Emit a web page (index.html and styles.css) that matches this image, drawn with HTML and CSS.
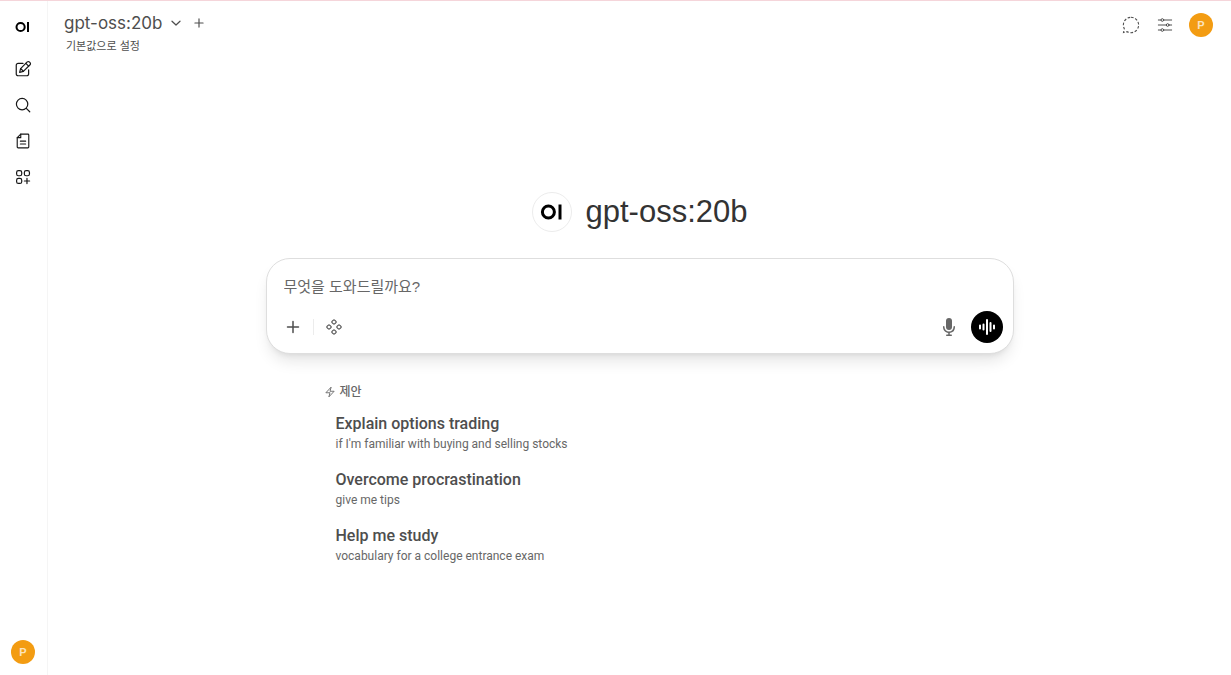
FILE: index.html
```html
<!DOCTYPE html>
<html lang="ko">
<head>
  <meta charset="UTF-8" />
  <meta name="viewport" content="width=device-width, initial-scale=1" />
  <title>Open WebUI</title>
  <link rel="stylesheet" href="styles.css">
</head>
<body>
  <div class="app">
    <nav class="sidebar" aria-label="Sidebar">
      <div class="sidebar-top">
        <button type="button" class="side-btn logo-btn" aria-label="Open sidebar">
          <svg width="16" height="16" viewBox="0 0 16 16" fill="none" stroke="#000" stroke-width="2">
            <circle cx="5.6" cy="8" r="4.1" />
            <path d="M13 3v10" />
          </svg>
        </button>
        <button type="button" class="side-btn" aria-label="New chat">
          <svg width="18" height="18" viewBox="0 0 24 24" fill="none" stroke="currentColor" stroke-width="1.600" stroke-linecap="round" stroke-linejoin="round">
            <path d="M12 4.500H5.500a2.500 2.500 0 0 0-2.500 2.500v11.500a2.500 2.500 0 0 0 2.500 2.500H17a2.500 2.500 0 0 0 2.500-2.500V13" />
            <path d="M7.500 16.500l1.300-5L17.700 2.600a1.900 1.900 0 0 1 2.700 0l1 1a1.900 1.900 0 0 1 0 2.700L12.500 15.200z" />
            <path d="M15.800 4.500l3.700 3.700M9 11.500l3.500 3.500" />
          </svg>
        </button>
        <button type="button" class="side-btn" aria-label="Search">
          <svg width="18" height="18" viewBox="0 0 24 24" fill="none" stroke="currentColor" stroke-width="1.600" stroke-linecap="round">
            <circle cx="10.800" cy="10.800" r="7.600" />
            <path d="M16.400 16.400L21 21" />
          </svg>
        </button>
        <button type="button" class="side-btn" aria-label="Notes">
          <svg width="18" height="18" viewBox="0 0 24 24" fill="none" stroke="currentColor" stroke-width="1.500" stroke-linecap="round" stroke-linejoin="round">
            <path d="M9 2.800h9.500a1.200 1.200 0 0 1 1.200 1.200v16a1.200 1.200 0 0 1-1.200 1.200h-13A1.200 1.200 0 0 1 4.300 20V7.500z" />
            <path d="M9 2.800v4.700H4.300M8.500 12.200h7M8.500 16h7" />
          </svg>
        </button>
        <button type="button" class="side-btn" aria-label="Workspace">
          <svg width="18" height="18" viewBox="0 0 24 24" fill="none" stroke="currentColor" stroke-width="1.600" stroke-linecap="round">
            <rect x="3.500" y="3.500" width="6.800" height="6.800" rx="2.400" />
            <rect x="13.800" y="3.500" width="6.800" height="6.800" rx="2.400" />
            <rect x="3.500" y="13.800" width="6.800" height="6.800" rx="2.400" />
            <path d="M17.300 13.800v7M13.800 17.300h7" />
          </svg>
        </button>
      </div>
      <button type="button" class="avatar" aria-label="User menu">P</button>
    </nav>

    <main class="main">
      <header class="topbar">
        <div class="model">
          <div class="model-row">
            <button type="button" class="model-name">
              gpt-oss:20b
              <svg width="12" height="12" viewBox="0 0 24 24" fill="none" stroke="currentColor" stroke-width="2.500" stroke-linecap="round" stroke-linejoin="round">
                <path d="M4 8.500l8 7.500 8-7.500" />
              </svg>
            </button>
            <button type="button" class="icon-btn" aria-label="Add model">
              <svg width="14" height="14" viewBox="0 0 24 24" fill="none" stroke="currentColor" stroke-width="2" stroke-linecap="round">
                <path d="M12 5v14M5 12h14" />
              </svg>
            </button>
          </div>
          <button type="button" class="set-default">기본값으로 설정</button>
        </div>
        <div class="topbar-actions">
          <button type="button" class="icon-btn" aria-label="Temporary chat">
            <svg width="20" height="20" viewBox="0 0 24 24" fill="none" stroke="currentColor" stroke-width="1.300" stroke-dasharray="3.200 2">
              <path d="M12 2.800a9.200 9.200 0 1 1-4.600 17.200L3 21l1-4.500A9.200 9.200 0 0 1 12 2.800z" />
            </svg>
          </button>
          <button type="button" class="icon-btn" aria-label="Controls">
            <svg width="20" height="20" viewBox="0 0 24 24" fill="none" stroke="currentColor" stroke-width="1.200" stroke-linecap="round">
              <path d="M10.500 6H20M4 6h3M4 12h9.500M17 12h3M10.500 18H20M4 18h3" />
              <circle cx="8.800" cy="6" r="1.600" />
              <circle cx="15.200" cy="12" r="1.600" />
              <circle cx="8.800" cy="18" r="1.600" />
            </svg>
          </button>
          <button type="button" class="avatar" aria-label="User menu">P</button>
        </div>
      </header>

      <section class="welcome">
        <h1 class="welcome-title">
          <span class="welcome-logo">
            <svg width="24" height="24" viewBox="0 0 24 24" fill="none" stroke="#000" stroke-width="3">
              <circle cx="8.400" cy="12" r="6" />
              <path d="M20 4.500v15" />
            </svg>
          </span>
          gpt-oss:20b
        </h1>

        <form class="composer">
          <input class="composer-input" type="text" placeholder="무엇을 도와드릴까요?" aria-label="무엇을 도와드릴까요?">
          <div class="composer-bar">
            <div class="composer-tools">
              <button type="button" class="tool-btn" aria-label="More">
                <svg width="20" height="20" viewBox="0 0 20 20" fill="none" stroke="currentColor" stroke-width="1.500" stroke-linecap="round">
                  <path d="M10 4.500v11M4.500 10h11" />
                </svg>
              </button>
              <span class="divider"></span>
              <button type="button" class="tool-btn" aria-label="Integrations">
                <svg width="18" height="18" viewBox="0 0 18 18" fill="none" stroke="currentColor" stroke-width="1.100">
                  <rect x="7.200" y="2.200" width="3.600" height="3.600" rx="0.800" transform="rotate(45 9 4)" />
                  <rect x="7.200" y="12.200" width="3.600" height="3.600" rx="0.800" transform="rotate(45 9 14)" />
                  <rect x="2.200" y="7.200" width="3.600" height="3.600" rx="0.800" transform="rotate(45 4 9)" />
                  <rect x="12.200" y="7.200" width="3.600" height="3.600" rx="0.800" transform="rotate(45 14 9)" />
                </svg>
              </button>
            </div>
            <div class="composer-tools">
              <button type="button" class="tool-btn mic" aria-label="Dictate">
                <svg width="20" height="20" viewBox="0 0 20 20" fill="currentColor">
                  <path d="M7 4a3 3 0 0 1 6 0v6a3 3 0 1 1-6 0V4Z" />
                  <path d="M5.500 9.643a.75.75 0 0 0-1.500 0V10c0 3.060 2.290 5.585 5.250 5.954V17.500h-1.500a.75.75 0 0 0 0 1.500h4.500a.75.75 0 0 0 0-1.500h-1.500v-1.546A6.001 6.001 0 0 0 16 10v-.357a.75.75 0 0 0-1.500 0V10a4.500 4.500 0 0 1-9 0v-.357Z" />
                </svg>
              </button>
              <button type="button" class="voice-btn" aria-label="Voice mode">
                <svg width="20" height="20" viewBox="0 0 20 20" fill="none" stroke="#fff" stroke-width="2" stroke-linecap="round">
                  <path d="M3 8.500v3M6.500 7.500v5M10 3v14M13.500 6v8M17 8.500v3" />
                </svg>
              </button>
            </div>
          </div>
        </form>

        <div class="suggestions">
          <h2 class="suggestions-label">
            <svg width="12" height="12" viewBox="0 0 24 24" fill="none" stroke="currentColor" stroke-width="1.800" stroke-linejoin="round">
              <path d="M3.750 13.500l10.500-11.250L12 10.500h8.250L9.750 21.750 12 13.500H3.750z" />
            </svg>
            제안
          </h2>
          <button type="button" class="suggestion">
            <span class="suggestion-title">Explain options trading</span>
            <span class="suggestion-text">if I'm familiar with buying and selling stocks</span>
          </button>
          <button type="button" class="suggestion">
            <span class="suggestion-title">Overcome procrastination</span>
            <span class="suggestion-text">give me tips</span>
          </button>
          <button type="button" class="suggestion">
            <span class="suggestion-title">Help me study</span>
            <span class="suggestion-text">vocabulary for a college entrance exam</span>
          </button>
        </div>
      </section>
    </main>
  </div>
</body>
</html>
```
FILE: styles.css
```css
* {
  box-sizing: border-box;
  margin: 0;
  padding: 0;
}
body {
  font-family: "Liberation Sans", "Noto Sans CJK KR", sans-serif;
  color: #4e4e4e;
  background: #fff;
}
button {
  font: inherit;
  color: inherit;
  background: none;
  border: none;
  cursor: pointer;
}
svg {
  display: block;
  flex-shrink: 0;
}

.app {
  display: flex;
  min-height: 100vh;
  border-top: 1px solid #f5d5da;
}

/* Sidebar */
.sidebar {
  width: 48px;
  flex-shrink: 0;
  display: flex;
  flex-direction: column;
  justify-content: space-between;
  padding: 8px 6px 11px 5px;
  border-right: 1px solid #f5f5f5;
  color: #171717;
}
.sidebar-top {
  display: flex;
  flex-direction: column;
}
.side-btn {
  width: 36px;
  height: 36px;
  display: flex;
  align-items: center;
  justify-content: center;
}
.logo-btn {
  margin-bottom: 6px;
}
.avatar {
  width: 24px;
  height: 24px;
  border-radius: 50%;
  background: #f39c12;
  color: #fbe3bd;
  font-size: 11px;
  font-weight: 700;
  line-height: 24px;
}
.sidebar .avatar {
  align-self: center;
}

/* Top bar */
.main {
  flex: 1;
  min-width: 0;
}
.topbar {
  display: flex;
  justify-content: space-between;
  align-items: flex-start;
  height: 56px;
  padding: 10px 18px 0 16px;
}
.model-row {
  display: flex;
  align-items: center;
  gap: 10px;
  height: 24px;
}
.model-name {
  display: flex;
  align-items: center;
  gap: 8px;
  font-family: Inter, sans-serif;
  font-size: 17px;
  line-height: 24px;
}
.set-default {
  display: block;
  padding-left: 2px;
  font-size: 11px;
  line-height: 22px;
}
.topbar-actions {
  display: flex;
  align-items: center;
  gap: 14px;
  padding-top: 2px;
}

/* Welcome */
.welcome {
  max-width: 780px;
  margin: 0 auto;
  padding: 135px 16px 24px;
}
.welcome-title {
  display: flex;
  align-items: center;
  justify-content: center;
  gap: 14px;
  font-size: 31px;
  font-weight: 400;
  line-height: 40px;
  color: #333;
}
.welcome-logo {
  width: 40px;
  height: 40px;
  display: flex;
  align-items: center;
  justify-content: center;
  border: 1px solid #ececec;
  border-radius: 50%;
}

/* Composer */
.composer {
  margin-top: 26px;
  padding: 15px 10px 10px;
  border: 1px solid #dedede;
  border-radius: 24px;
  background: #fff;
  box-shadow: 0 10px 15px -3px rgba(0, 0, 0, 0.1), 0 4px 6px -4px rgba(0, 0, 0, 0.1);
}
.composer-input {
  display: block;
  width: 100%;
  height: 24px;
  padding: 0 7px;
  border: none;
  outline: none;
  background: none;
  font: inherit;
  font-size: 15px;
}
.composer-input::placeholder {
  color: #676767;
}
.composer-bar {
  display: flex;
  justify-content: space-between;
  margin-top: 13px;
}
.composer-tools {
  display: flex;
  align-items: center;
  gap: 4px;
}
.tool-btn {
  width: 32px;
  height: 32px;
  display: flex;
  align-items: center;
  justify-content: center;
}
.mic {
  margin-right: 2px;
  color: #676767;
}
.divider {
  width: 1px;
  height: 16px;
  background: #ececec;
}
.voice-btn {
  width: 32px;
  height: 32px;
  display: flex;
  align-items: center;
  justify-content: center;
  border-radius: 50%;
  background: #000;
}

/* Suggestions */
.suggestions {
  margin-top: 30px;
  padding: 0 58px;
}
.suggestions-label {
  display: flex;
  align-items: center;
  gap: 4px;
  margin-bottom: 4px;
  font-size: 12px;
  font-weight: 500;
  line-height: 16px;
  color: #676767;
}
.suggestion {
  display: block;
  width: 100%;
  padding: 8px 12px;
  text-align: left;
}
.suggestion-title,
.suggestion-text {
  display: block;
  font-family: Roboto, sans-serif;
}
.suggestion-title {
  font-size: 16px;
  font-weight: 500;
  line-height: 24px;
}
.suggestion-text {
  font-size: 12px;
  line-height: 16px;
  color: #676767;
}
```
